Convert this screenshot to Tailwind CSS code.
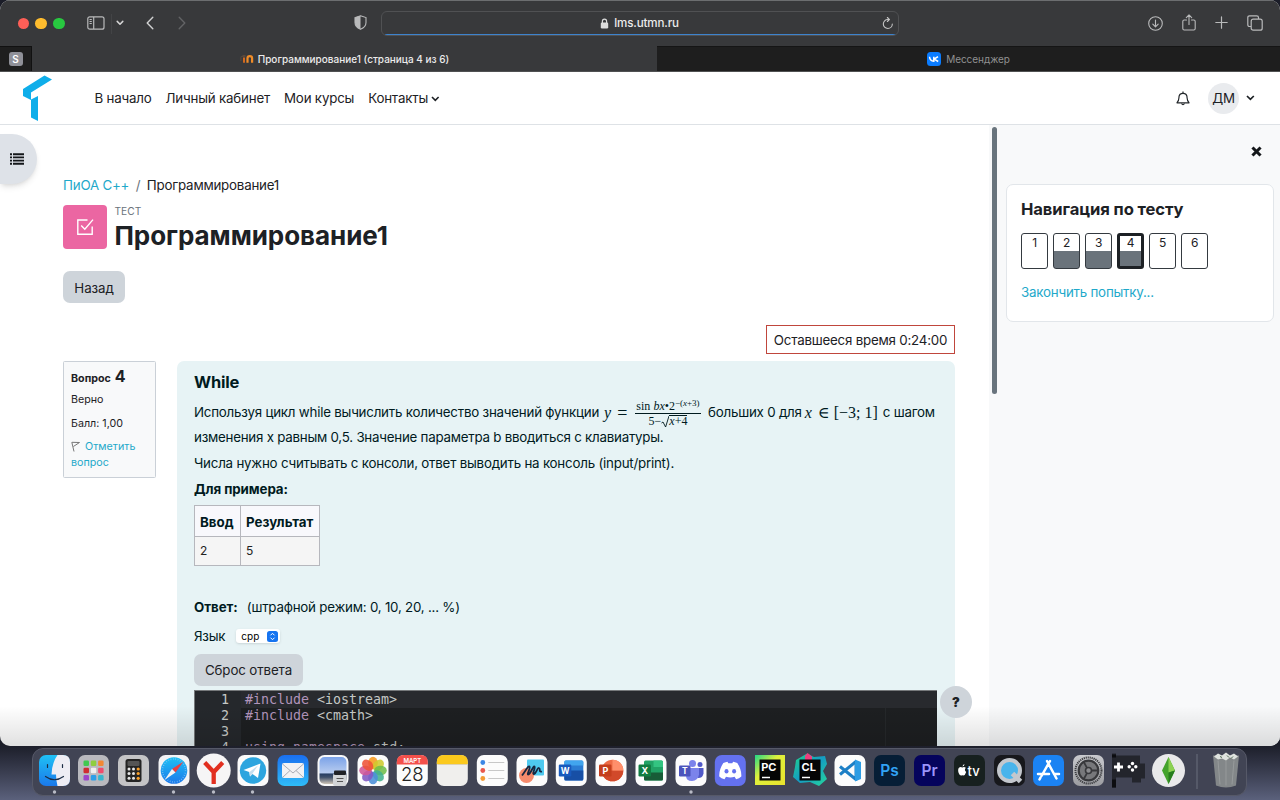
<!DOCTYPE html>
<html lang="ru">
<head>
<meta charset="utf-8">
<title>Программирование1 (страница 4 из 6)</title>
<script src="https://cdn.jsdelivr.net/npm/@tailwindcss/browser@4"></script>
</head>
<body class="w-[1280px] h-[800px] overflow-hidden bg-gradient-to-b from-[#1b1d28] from-93% to-[#5b617c] text-[13.33px] text-[#1d2125] whitespace-nowrap" style="font-family:Inter,'Noto Sans',sans-serif">
<div class="flex flex-col w-[1280px] h-[800px]">

<!-- browser window -->
<div class="relative h-[746px] shrink-0 flex flex-col rounded-[10px] overflow-hidden bg-white">
  <!-- toolbar -->
  <div class="h-[46px] shrink-0 bg-[#38393b] border-t border-[#6c6e70] flex items-center text-[#b9babb]">
    <div class="flex gap-[5.6px] ml-[17.5px]">
      <i class="block size-[11.5px] rounded-full bg-[#fe5f57]"></i><i class="block size-[11.5px] rounded-full bg-[#febc2e] ml-[0.7px]"></i><i class="block size-[11.5px] rounded-full bg-[#28c840] ml-[0.7px]"></i>
    </div>
    <svg class="ml-[22px] mt-[-1px]" width="18" height="14" viewBox="0 0 18 14" fill="none" stroke="currentColor" stroke-width="1.2"><rect x=".8" y=".8" width="16.2" height="12.4" rx="2"/><path d="M6.7 1v12M2.5 3.5h2.3M2.5 5.5h2.3M2.5 7.5h2.3" /></svg>
    <i class="block w-px h-5 bg-[#434446] ml-1.5"></i>
    <svg class="ml-[4px] mt-[-1px]" width="8" height="6" viewBox="0 0 8 6" fill="none" stroke="#d5d5d5" stroke-width="1.5" stroke-linecap="round" stroke-linejoin="round"><path d="M1.2 1.4 4 4.2l2.8-2.8"/></svg>
    <svg class="ml-[22px] mt-[-2px]" width="8" height="14" viewBox="0 0 8 14" fill="none" stroke="#d0d1d1" stroke-width="1.4" stroke-linecap="round" stroke-linejoin="round"><path d="M6.8 1.2 1.2 7l5.6 5.8"/></svg>
    <svg class="ml-[24px] mt-[-2px]" width="8" height="14" viewBox="0 0 8 14" fill="none" stroke="#626365" stroke-width="1.4" stroke-linecap="round" stroke-linejoin="round"><path d="M1.2 1.2 6.8 7l-5.600 5.800"/></svg>
    <svg class="ml-[168px] mt-[-2px]" width="13" height="15" viewBox="0 0 13 15"><path d="M6.500.8 12 2.600v5c0 3.300-2.200 5.400-5.500 6.700C3.200 13 1 10.900 1 7.600v-5z" fill="none" stroke="#b9babb" stroke-width="1.100"/><path d="M6.500.8v13.500C3.200 13 1 10.900 1 7.600v-5z" fill="#b9babb"/></svg>
    <div class="relative ml-[14px] w-[518px] h-[25px] rounded-[6px] bg-[#38393b] border border-[#505153] overflow-hidden flex items-center justify-center text-[#ebebeb] text-[11.600px] tracking-[-.15px] font-medium">
      <svg class="mr-[5px]" width="9" height="11" viewBox="0 0 9 11"><rect x=".8" y="4.600" width="7.400" height="5.900" rx="1.200" fill="#dcdcdc"/><path d="M2.400 5V3.200a2.100 2.100 0 0 1 4.200 0V5" fill="none" stroke="#dcdcdc" stroke-width="1.200"/></svg>
      <span class="pt-px">lms.utmn.ru</span>
      <svg class="absolute right-[4px] top-[5px]" width="12" height="13" viewBox="0 0 12 13" fill="none" stroke="#c4c4c4" stroke-width="1.100" stroke-linecap="round"><path d="M10.300 7A4.500 4.500 0 1 1 5.800 2.500h1.400M5.400.5l2 2-2 2"/></svg>
      <i class="absolute left-[3px] right-[2px] bottom-0 h-[1.500px] bg-[#3d83cd]"></i>
    </div>
    <svg class="ml-[249px] mt-[-1px]" width="15" height="15" viewBox="0 0 15 15" fill="none" stroke="currentColor" stroke-width="1.100" stroke-linecap="round" stroke-linejoin="round"><circle cx="7.500" cy="7.500" r="6.800"/><path d="M7.500 4v6.700M4.800 8.200l2.700 2.700 2.700-2.700"/></svg>
    <svg class="ml-[19px] mt-[-2px]" width="14" height="17" viewBox="0 0 14 17" fill="none" stroke="currentColor" stroke-width="1.100" stroke-linecap="round" stroke-linejoin="round"><path d="M4.500 6H2.200Q.8 6 .8 7.400v7Q.8 16 2.200 16h9.600q1.400 0 1.400-1.500v-7Q13.200 6 11.800 6H9.500M7 10.500V1M4.300 3.600 7 .9l2.700 2.700"/></svg>
    <svg class="ml-[19px] mt-[-2px]" width="13" height="13" viewBox="0 0 13 13" stroke="currentColor" stroke-width="1.200" stroke-linecap="round"><path d="M6.500.8v11.400M.8 6.500h11.400"/></svg>
    <svg class="ml-[19.500px] mt-[-2px]" width="16" height="16" viewBox="0 0 16 16" fill="none" stroke="currentColor" stroke-width="1.200"><rect x="4.200" y="4.200" width="11" height="11" rx="2"/><path d="M4 11.500H2.600q-1.800 0-1.800-1.800V2.600Q.8.8 2.600.8h7.100q1.800 0 1.800 1.800V4"/></svg>
  </div>
  <!-- tabs -->
  <div class="h-[26px] shrink-0 flex bg-[#1e1e1e] text-[10px] border-b border-[#505152]">
    <div class="w-8 flex items-center justify-center border-r border-t border-[#111]"><span class="size-[14px] rounded-[3px] bg-[#8f9098] text-white font-semibold text-[10px] leading-[14px] text-center">S</span></div>
    <div class="w-[625px] bg-[#38393b] flex items-center justify-center text-[#ececec] font-medium">
      <svg class="mr-1" width="14" height="11" viewBox="0 0 14 11" fill="none"><path d="M7.500 9.800V5.200q0-2 2.300-2t2.300 2v4.600" stroke="#f08c28" stroke-width="2.200"/><path d="M.2 3.800 4 1.800l2.500 1.200-2.500 1z" fill="#5d4b3e"/><path d="M.9 4v4" stroke="#5d4b3e" stroke-width=".8"/><path d="M4 4.500v5.300" stroke="#d2691f" stroke-width="2"/></svg>
      <span class="pt-[2px]">Программирование1 (страница 4 из 6)</span>
    </div>
    <div class="flex-1 border-t border-[#151515] flex items-center justify-center text-[#919191]">
      <svg class="mr-[5px]" width="14" height="14" viewBox="0 0 14 14"><rect width="14" height="14" rx="3.500" fill="#0a7cff"/><path d="M2.500 4.800q.4 4.200 4.300 4.500V4.800M11 4.700 7.200 7.100 11.200 9.500" fill="none" stroke="#fff" stroke-width="1.500"/></svg>
      <span class="pt-px tracking-[-.05px]">Мессенджер</span>
    </div>
  </div>
  <!-- site header -->
  <div class="h-[53px] shrink-0 flex items-center border-b border-[#dee2e6] bg-white">
    <svg class="ml-[22px] mt-[-2px]" width="31" height="47" viewBox="0 0 31 47" fill="#0faeea"><path d="M1 15 22.500 1.500 30 5.500 9 18.500V26L1 22z"/><path d="M9 25.500 16 22V47L9 43.500z"/></svg>
    <nav class="flex gap-[14px] ml-[41.500px] pt-[2px] tracking-[-.2px]"><span>В начало</span><span>Личный кабинет</span><span>Мои курсы</span><span class="flex items-center gap-[3px]">Контакты<svg width="9" height="6" viewBox="0 0 9 6" fill="none" stroke="#1d2125" stroke-width="1.600"><path d="M1 1l3.300 3.300L7.600 1"/></svg></span></nav>
    <svg class="ml-auto" width="14" height="15" viewBox="0 0 14 15" fill="none" stroke="#24282c" stroke-width="1.200" stroke-linejoin="round"><path d="M1 11.800C3 10 2.800 8.500 3 5.800 3.200 3.500 4.800 2.300 7 2.300s3.800 1.200 4 3.500c.2 2.700 0 4.200 2 6z"/><path d="M7 2.300V.6M5.500 12.500q1.500 2.400 3 0"/></svg>
    <span class="ml-[18px] size-[31px] rounded-full bg-[#e9ebee] flex items-center justify-center pt-[2px] tracking-[-.2px]">ДМ</span>
    <svg class="ml-[7px] mr-[25px]" width="9" height="6" viewBox="0 0 9 6" fill="none" stroke="#1d2125" stroke-width="1.700"><path d="M1 1l3.400 3.400L7.800 1"/></svg>
  </div>
  <!-- page -->
  <div class="relative flex h-[621px] tracking-[-.22px]">
    <main class="w-[989px] h-full pl-[63px] pr-[34px] shrink-0">
      <div class="mt-[49px] h-[22px] flex items-center pt-[2px]"><a class="text-[#1fa9ca] tracking-[-.2px]">ПиОА C++</a><span class="mx-[6.500px] text-[#6a737b]">/</span><span>Программирование1</span></div>
      <div class="mt-[9px] flex h-11">
        <div class="size-[44px] rounded-[4px] bg-[#eb66a2] flex items-center justify-center"><svg class="mt-[-1px]" width="18" height="18" viewBox="0 0 18 18" fill="none" stroke="#fff" stroke-width="1.400"><path d="M11.500 2H1.800v14.200h14.400V8.500M5.200 7.600l3.600 3.600L17 1.600"/></svg></div>
        <div class="ml-[7.500px] flex flex-col"><span class="text-[10.200px] leading-[13px] text-[#6a737b] tracking-normal">ТЕСТ</span><h1 class="pt-px text-[26px] leading-[34px] font-bold tracking-[-.06px]">Программирование1</h1></div>
      </div>
      <button class="mt-[22px] w-[62px] h-8 rounded-[7px] bg-[#ced4da] flex items-center justify-center pt-[3px] tracking-[-.1px]">Назад</button>
      <div class="mt-[22px] ml-auto w-[189px] h-[29px] border border-[#c0463c] flex items-center justify-center pt-[2px]">Оставшееся время 0:24:00</div>
      <div class="mt-[7px] flex gap-[21px]">
        <div class="w-[93px] h-[117px] border border-[#cad0d7] bg-[#f8f9fa] rounded-[1.500px] pl-[7px] text-[10.700px] tracking-normal text-[#1d2125]">
          <div class="h-[20px] mt-[4px] flex items-baseline font-bold">Вопрос<span class="text-[16px] leading-[20px] ml-[4px]">4</span></div>
          <div class="mt-[6px] leading-4">Верно</div>
          <div class="mt-2 leading-4">Балл: 1,00</div>
          <div class="mt-[7px] leading-4 text-[#1fa9ca]"><svg class="inline mr-[4px] align-[-2px]" width="10" height="11" viewBox="0 0 10 11" fill="none" stroke="#777" stroke-width="1"><path d="M.8 1.200 3 10.500M1 1.300l7.500.2L2.400 5.500"/></svg>Отметить<br>вопрос</div>
        </div>
        <div class="w-[778px] h-[385px] rounded-t-[7px] bg-[#e7f3f5] pl-[17px] text-[#001a1e]">
          <h2 class="mt-[11px] text-[16.500px] leading-[20px] font-bold tracking-[-.2px]">While</h2>
          <div class="mt-[7px] h-[28px] flex items-center">
            <span>Используя цикл while вычислить количество значений функции</span>
            <span class="ml-[5px] w-[101px] flex items-center text-[16px] tracking-normal" style="font-family:'Liberation Serif',serif"><i>y</i><span class="ml-[6px] text-[18px]">=</span>
              <span class="ml-[8px] mt-[2px] flex flex-col items-center text-[12px] leading-[13px]"><span class="border-b border-[#001a1e] px-px h-[14px]">sin <i>bx</i>•2<sup class="text-[9px] leading-none top-[-4px]">−(<i>x</i>+3)</sup></span><span class="flex items-center h-[14px]">5−<svg width="8" height="13" viewBox="0 0 8 13" fill="none" stroke="#001a1e" stroke-width=".9"><path d="M.5 8 2 7l2.600 5L8 1"/></svg><span class="border-t border-[#001a1e] h-[12px] leading-[11px]"><i>x</i>+4</span></span></span>
            </span>
            <span class="ml-[3px]">больших 0 для</span>
            <span class="ml-[3px] text-[16px] tracking-normal" style="font-family:'Liberation Serif','DejaVu Serif',serif"><i>x</i> <span class="ml-[2px]">∈</span> [−3; 1]</span>
            <span class="ml-[5px]">с шагом</span>
          </div>
          <p class="mt-[-1px] leading-[22px] tracking-[-.24px]">изменения x равным 0,5. Значение параметра b вводиться с клавиатуры.</p>
          <p class="mt-[4px] leading-[22px]">Числа нужно считывать с консоли, ответ выводить на консоль (input/print).</p>
          <p class="mt-[4px] leading-[22px] font-bold tracking-[-.08px]">Для примера:</p>
          <div class="mt-[5px] w-[126px] h-[61px] grid grid-cols-[45px_78px] grid-rows-[30px_28px] gap-px p-px bg-[#b6b7bd]">
            <div class="bg-[#f8f8fc] flex items-center pl-[5px] pt-[3px] font-bold tracking-normal">Ввод</div><div class="bg-[#f8f8fc] flex items-center pl-[5px] pt-[3px] font-bold tracking-normal">Результат</div>
            <div class="bg-[#f5f5f5] flex items-center pl-[5px] text-[12px] text-[#222]">2</div><div class="bg-[#f5f5f5] flex items-center pl-[5px] text-[12px] text-[#222]">5</div>
          </div>
          <p class="mt-[30px] leading-[22px]"><b class="tracking-[-.05px]">Ответ:</b><span class="ml-[9px]">(штрафной режим: 0, 10, 20, ... %)</span></p>
          <div class="mt-[8px] h-[20px] flex items-center"><span class="pt-px">Язык</span><span class="ml-[11px] w-[44px] h-[14px] rounded-[3px] bg-white shadow-sm flex items-center pl-[5px] pr-[2px] justify-between text-[10px] tracking-normal text-black">cpp<svg width="11" height="11" viewBox="0 0 11 11"><rect width="11" height="11" rx="2.500" fill="#1674f0"/><path d="M3.500 4.300l2-2 2 2M3.500 6.700l2 2 2-2" fill="none" stroke="#fff"/></svg></span></div>
          <button class="mt-[8px] w-[109px] h-[32px] rounded-[7px] bg-[#ced4da] flex items-center justify-center pt-[2px] tracking-[-.13px] text-[#1d2125]">Сброс ответа</button>
          <div class="mt-[4px] flex items-start tracking-normal">
            <!-- code editor -->
            <div class="w-[743px] shrink-0 h-[57px] overflow-hidden border-l border-t border-[#76797b] bg-[#1d1f21] flex text-[13.300px] leading-[16px] text-[#c5c8c6]" style="font-family:'DejaVu Sans Mono',monospace">
              <div class="w-[46px] shrink-0 bg-[#25282c] text-right pr-[12px] pt-px">1<br>2<br>3<br>4</div>
              <div class="w-[645px] shrink-0 h-full border-r border-[#25282a]"><div class="pl-[4px] pt-px w-[697px] bg-[#282a2e]"><span class="text-[#b294bb]">#include</span> &lt;iostream&gt;</div><div class="pl-[4px]"><span class="text-[#b294bb]">#include</span> &lt;cmath&gt;</div><div class="h-4"></div><div class="pl-[4px]"><span class="text-[#b294bb]">using</span> <span class="text-[#b294bb]">namespace</span> std;</div></div>
            </div>
            <span class="relative z-10 ml-[3px] mt-[-4px] size-8 shrink-0 rounded-full bg-[#ced4da] flex items-center justify-center pt-px font-black text-[13px] text-[#1d2125]">?</span>
          </div>
        </div>
      </div>
    </main>
    <aside class="flex-1 h-full bg-[#f8f9fa] flex">
      <div class="ml-[3px] mt-[2px] w-[5px] h-[267px] rounded-full bg-[#69747d]"></div>
      <div class="ml-[9px] w-[268px]">
        <svg class="mt-[21px] ml-auto mr-[12px]" width="11" height="11" viewBox="0 0 11 11" stroke="#14171a" stroke-width="3" stroke-linecap="square"><path d="M2.500 2.500l6 6M8.500 2.500l-6 6"/></svg>
        <section class="mt-[27px] h-[138px] rounded-[7px] border border-[#e2e6ea] bg-white pl-[14px]">
          <h3 class="mt-[13px] text-[16.600px] leading-[22px] font-bold tracking-[-.1px]">Навигация по тесту</h3>
          <div class="mt-[13px] flex gap-[5px] text-[12px] leading-[17px] text-center">
            <span class="w-[27px] h-[36px] rounded-[3px] border border-[#343a40]">1</span>
            <span class="w-[27px] h-[36px] rounded-[3px] border border-[#343a40] bg-linear-to-b from-white from-50% to-[#6a737b] to-50%">2</span>
            <span class="w-[27px] h-[36px] rounded-[3px] border border-[#343a40] bg-linear-to-b from-white from-50% to-[#6a737b] to-50%">3</span>
            <span class="w-[27px] h-[36px] rounded-[3px] border-[3px] border-[#1d2125] bg-linear-to-b from-white from-50% to-[#6a737b] to-50% leading-[13px]">4</span>
            <span class="w-[27px] h-[36px] rounded-[3px] border border-[#343a40]">5</span>
            <span class="w-[27px] h-[36px] rounded-[3px] border border-[#343a40]">6</span>
          </div>
          <a class="block mt-[12px] leading-[22px] text-[#1fa9ca]">Закончить попытку...</a>
        </section>
      </div>
    </aside>
    <div class="absolute left-0 top-[9px] w-[37px] h-[50px] rounded-r-full bg-[#dee2e8] shadow-md flex items-center pl-[9px]"><svg width="15" height="12" viewBox="0 0 15 12" stroke="#14171a" stroke-width="1.900"><path d="M1 1.200h2M1 4.400h2M1 7.600h2M1 10.800h2M4 1.200h11M4 4.400h11M4 7.600h11M4 10.800h11"/></svg></div>
    <div class="absolute left-0 bottom-0 w-full h-[40px] bg-gradient-to-b from-transparent to-black/12 pointer-events-none"></div>
  </div>
</div>

<!-- dock -->
<div class="mt-[2px] ml-[32px] w-[1215px] h-[48px] shrink-0 rounded-[11px] bg-[#414454] border border-[#565968] pl-px flex">
  <svg width="1212" height="46" viewBox="34 749 1212 46" style="font-family:Inter,sans-serif">
    <defs>
      <linearGradient id="gb" x1="0" y1="0" x2="0" y2="1"><stop stop-color="#1fc1f5"/><stop offset="1" stop-color="#1a78ea"/></linearGradient>
      <linearGradient id="bb" x1="0" y1="0" x2="0" y2="1"><stop stop-color="#1a6ff0"/><stop offset="1" stop-color="#2fbdf8"/></linearGradient>
      <linearGradient id="gg" x1="0" y1="0" x2="0" y2="1"><stop stop-color="#c9cace"/><stop offset="1" stop-color="#9b9ca0"/></linearGradient>
      <linearGradient id="pc" x1="0" y1="0" x2="1" y2="1"><stop stop-color="#21d789"/><stop offset=".4" stop-color="#dff03c"/><stop offset="1" stop-color="#e9e32c"/></linearGradient>
      <linearGradient id="cl" x1="0" y1="0" x2="1" y2="1"><stop stop-color="#21d789"/><stop offset=".5" stop-color="#149bc4"/><stop offset="1" stop-color="#27d79a"/></linearGradient>
      <linearGradient id="sky" x1="0" y1="0" x2="0" y2="1"><stop stop-color="#7ba2e8"/><stop offset=".6" stop-color="#b9cdf0"/><stop offset=".62" stop-color="#263d63"/><stop offset=".75" stop-color="#40506a"/><stop offset="1" stop-color="#cfc6b8"/></linearGradient>
      <rect id="t" x="-15.500" y="-15.500" width="31" height="31" rx="7"/>
    </defs>
    <!-- Finder -->
    <g transform="translate(54.500 770.500)"><use href="#t" fill="url(#gb)"/><path d="M3-15.500h5.500q7 0 7 7v17q0 7-7 7H3Q1.500 10 1.500 4H-3Q-2.500-8 3-15.500z" fill="#eeedf4"/><path d="M-7-6v3M8-6v3M-9 6q9 6.500 18 0" stroke="#1b2c44" stroke-width="1.200" fill="none" stroke-linecap="round"/></g>
    <!-- Launchpad -->
    <g transform="translate(93.500 770.500)"><use href="#t" fill="#b9b9be"/><g><rect x="-10" y="-10" width="5.500" height="5.500" rx="1.300" fill="#41c950"/><rect x="-2.700" y="-10" width="5.500" height="5.500" rx="1.300" fill="#8fce3f"/><rect x="4.600" y="-10" width="5.500" height="5.500" rx="1.300" fill="#f28734"/><rect x="-10" y="-2.700" width="5.500" height="5.500" rx="1.300" fill="#d02c32"/><rect x="-2.700" y="-2.700" width="5.500" height="5.500" rx="1.300" fill="#efefef"/><rect x="4.600" y="-2.700" width="5.500" height="5.500" rx="1.300" fill="#f04b6d"/><rect x="-10" y="4.600" width="5.500" height="5.500" rx="1.300" fill="#9c44c9"/><rect x="-2.700" y="4.600" width="5.500" height="5.500" rx="1.300" fill="#2d9fe8"/><rect x="4.600" y="4.600" width="5.500" height="5.500" rx="1.300" fill="#37b6ce"/></g></g>
    <!-- Calculator -->
    <g transform="translate(133.500 770.500)"><use href="#t" fill="#c4c4c6"/><rect x="-8" y="-11.500" width="16" height="23" rx="2.500" fill="#242424"/><rect x="-6" y="-9.500" width="12" height="5" rx="1" fill="#555"/><g fill="#e5e5e5"><circle cx="-4.500" cy="-1.500" r="1.500"/><circle cy="-1.500" r="1.500"/><circle cx="-4.500" cy="3" r="1.500"/><circle cy="3" r="1.500"/><circle cx="-4.500" cy="7.800" r="1.500"/><circle cy="7.800" r="1.500"/></g><g fill="#f7a02b"><circle cx="4.700" cy="-1.500" r="1.600"/><circle cx="4.700" cy="3" r="1.600"/><circle cx="4.700" cy="7.800" r="1.600"/></g></g>
    <!-- Safari -->
    <g transform="translate(174 770.500)"><use href="#t" fill="#f3f3f5"/><circle r="13.300" fill="url(#gb)"/><circle r="11.500" fill="none" stroke="#8ec8f7" stroke-width="1.500" stroke-dasharray=".6 1.800"/><path d="M9.500-9 1.500 2-2-1.500z" fill="#ec4040"/><path d="M-9.500 9.500 1.500 2-2-1.500z" fill="#f2f2f2"/></g>
    <!-- Yandex -->
    <g transform="translate(213.700 770.500)"><circle r="17" fill="#f6f5f6"/><path d="M-9-8 0 1.500 9-8M0 1v12.500" stroke="#e22f20" stroke-width="4.300" fill="none"/></g>
    <!-- Telegram -->
    <g transform="translate(253 770.500)"><use href="#t" fill="#fbfbfb"/><circle r="13.200" fill="#2da5df"/><path d="M-9.500-.5 7.500-7 5 7.500-.5 3.500-3 6-3.800 1.500z" fill="#fff"/><path d="M-3.500 1.500 5-5-.8 3.500-3 6z" fill="#c5dff0"/></g>
    <!-- Mail -->
    <g transform="translate(293 770.500)"><use href="#t" fill="url(#bb)"/><rect x="-11" y="-7.500" width="22" height="15" rx="2" fill="#f2f2f4"/><path d="M-10.500-6.500 0 2.500l10.500-9M-10.500 7-3 0M10.500 7 3 0" stroke="#a9adb5" fill="none"/></g>
    <!-- Preview -->
    <g transform="translate(333 770.500)"><use href="#t" fill="#f8f8f8"/><rect x="-13.500" y="-13.500" width="27" height="27" rx="5" fill="url(#sky)"/><rect x="0" y="3" width="13.500" height="12.500" rx="2" fill="#d3d5d7"/><rect x="1" y="0" width="12" height="4.500" rx="1" fill="#202226"/><path d="M3.500 8h7M4 11h6" stroke="#555"/></g>
    <!-- Photos -->
    <g transform="translate(373 770.500)"><use href="#t" fill="#fcfcfc"/><g fill-opacity=".88"><ellipse cy="-7.500" rx="4.800" ry="6.300" fill="#f79a1f"/><ellipse cy="-7.500" rx="4.800" ry="6.300" fill="#cfcb2e" transform="rotate(45)"/><ellipse cy="-7.500" rx="4.800" ry="6.300" fill="#6fbd4a" transform="rotate(90)"/><ellipse cy="-7.500" rx="4.800" ry="6.300" fill="#41b08e" transform="rotate(135)"/><ellipse cy="-7.500" rx="4.800" ry="6.300" fill="#4a90da" transform="rotate(180)"/><ellipse cy="-7.500" rx="4.800" ry="6.300" fill="#8158c4" transform="rotate(225)"/><ellipse cy="-7.500" rx="4.800" ry="6.300" fill="#cf5698" transform="rotate(270)"/><ellipse cy="-7.500" rx="4.800" ry="6.300" fill="#ee5338" transform="rotate(315)"/></g></g>
    <!-- Calendar -->
    <g transform="translate(412.300 770.500)"><use href="#t" fill="#fcfcfc"/><path d="M-15.500-6v-2.500q0-7 7-7h17q7 0 7 7V-6z" fill="#f4504b"/><text y="-8" text-anchor="middle" font-size="6" font-weight="600" fill="#fff">МАРТ</text><text y="10.500" text-anchor="middle" font-size="18.500" font-weight="300" fill="#222">28</text></g>
    <!-- Notes -->
    <g transform="translate(452.300 770.500)"><use href="#t" fill="#f0efed"/><path d="M-15.500-6.500v-2q0-7 7-7h17q7 0 7 7v2z" fill="#fbc91d"/><path d="M-15-6h30" stroke="#d8c9a0" stroke-width=".8"/></g>
    <!-- Reminders -->
    <g transform="translate(492.300 770.500)"><use href="#t" fill="#fcfcfc"/><circle cx="-9.500" cy="-8" r="2.400" fill="#3b86e5"/><circle cx="-9.500" cy="0" r="2.400" fill="#e9584c"/><circle cx="-9.500" cy="8" r="2.400" fill="#f39b34"/><path d="M-4-8h16M-4 0h16M-4 8h16" stroke="#c8c8c8"/></g>
    <!-- Freeform -->
    <g transform="translate(532 770.500)"><use href="#t" fill="#fcfcfc"/><rect x="-5" y="-11" width="17" height="16" rx="1" fill="#4ec9ef"/><circle cx="-5.500" cy="5" r="7.500" fill="#f58a6c"/><path d="M-10 5C-6 0-4-5-2.500-4S-6 5-3.500 4 1-5 2.500-4-.5 4 2 3.500 5-3 7-2.500 6 2 10 1" stroke="#17263f" stroke-width="1.800" fill="none"/></g>
    <!-- Word -->
    <g transform="translate(571.300 770.500)"><use href="#t" fill="#fcfcfc"/><rect x="-7" y="-10" width="19" height="20" rx="1.500" fill="#2b7cd3"/><path d="M-7-8.500q0-1.500 1.500-1.500h16q1.500 0 1.500 1.500V-5H-7z" fill="#41a5ee"/><path d="M-7 0h19v8.500q0 1.500-1.500 1.500h-16Q-7 10-7 8.500z" fill="#174fa5"/><rect x="-12.500" y="-6" width="12.500" height="12" rx="1.200" fill="#185abd"/><text x="-6.200" y="3.200" text-anchor="middle" font-size="8.500" font-weight="700" fill="#fff">W</text></g>
    <!-- PowerPoint -->
    <g transform="translate(611 770.500)"><use href="#t" fill="#fcfcfc"/><circle cx="1.500" r="10.800" fill="#ed6c47"/><path d="M1.500 0h10.800a10.800 10.800 0 0 1-21.600 0z" fill="#d1492a"/><path d="M1.500-10.800A10.800 10.800 0 0 1 12.300 0H1.500z" fill="#ff8f6b"/><rect x="-12" y="-6" width="12.500" height="12" rx="1.200" fill="#c43e1c"/><text x="-5.700" y="3.200" text-anchor="middle" font-size="9" font-weight="700" fill="#fff">P</text></g>
    <!-- Excel -->
    <g transform="translate(651 770.500)"><use href="#t" fill="#fcfcfc"/><rect x="-7" y="-10" width="19" height="20" rx="1.500" fill="#21a366"/><path d="M2.500-10h8q1.500 0 1.500 1.500V-3.500H2.500z" fill="#33c481"/><path d="M-7 2h19v6.500q0 1.500-1.500 1.500h-16Q-7 10-7 8.500z" fill="#185c37"/><rect x="-12.500" y="-6" width="12.500" height="12" rx="1.200" fill="#107c41"/><text x="-6.200" y="3.200" text-anchor="middle" font-size="9" font-weight="700" fill="#fff">X</text></g>
    <!-- Teams -->
    <g transform="translate(691 770.500)"><use href="#t" fill="#fcfcfc"/><circle cx="1.500" cy="-7" r="3.500" fill="#7b83eb"/><circle cx="9" cy="-6" r="2.500" fill="#5059c9"/><path d="M5-2.500h7.500V3q-1 5-6 4.500z" fill="#5059c9"/><path d="M-5-2.500H8V4q-1 6.500-7 6.500T-5 5z" fill="#7b83eb"/><rect x="-12" y="-5" width="11.500" height="11" rx="1.200" fill="#4b53bc"/><text x="-6.200" y="3.800" text-anchor="middle" font-size="8.500" font-weight="700" fill="#fff">T</text></g>
    <!-- Discord -->
    <g transform="translate(730.300 770.500)"><use href="#t" fill="#6471ef"/><path d="M-7-7.500Q-4.500-8.500-2.800-8.700L-2-7.200h4l.8-1.500q1.700.2 4.200 1.200Q11.500-.5 11 6q-2 2-5.200 2.700L4.300 6.300Q0 7.500-4.300 6.300l-1.500 2.400Q-9 8-11 6q-.5-6.500 4-13.500z" fill="#fff"/><ellipse cx="-3.800" cy=".8" rx="2" ry="2.300" fill="#6471ef"/><ellipse cx="3.800" cy=".8" rx="2" ry="2.300" fill="#6471ef"/></g>
    <!-- PyCharm -->
    <g transform="translate(770 770)"><rect x="-15" y="-15" width="30" height="30" fill="url(#pc)"/><rect x="-10.500" y="-10.500" width="21" height="21" fill="#050505"/><text x="-8.800" y="1" font-size="11" font-weight="700" fill="#fff">PC</text><path d="M-8 7.500h8" stroke="#fff" stroke-width="1.500"/></g>
    <!-- CLion -->
    <g transform="translate(810 770)"><path d="M-14-10-3-16.500 4-13 15-14 17-6 13 1l4 8-8 7-9-4-10 1-7-6 2-10z" fill="url(#cl)"/><path d="M-5-14-2.500-17 2-13.500V-9h-7z" fill="#ee3f7d"/><rect x="-10.500" y="-10.500" width="21" height="21" fill="#050505"/><text x="-8.500" y="1" font-size="11" font-weight="700" fill="#fff">CL</text><path d="M-8 7.500h8" stroke="#fff" stroke-width="1.500"/></g>
    <!-- VS Code -->
    <g transform="translate(850 770.500)"><use href="#t" fill="#fcfcfc"/><path d="M6-9v18L-10-4" fill="none" stroke="#1c7fc6" stroke-width="3" stroke-linejoin="round"/><path d="M6-9-10 4" stroke="#1c7fc6" stroke-width="3"/><path d="M5-11l6 2.500v17L5 11z" fill="#2c9ce4"/></g>
    <!-- Photoshop, Premiere -->
    <g transform="translate(889.500 770.500)"><use href="#t" fill="#061e36"/><text y="5" text-anchor="middle" font-size="15.500" font-weight="600" fill="#31a3f5">Ps</text></g>
    <g transform="translate(929.500 770.500)"><use href="#t" fill="#05045c"/><text y="5" text-anchor="middle" font-size="15.500" font-weight="600" fill="#9b94fa">Pr</text></g>
    <!-- TV -->
    <g transform="translate(969.500 770.500)"><use href="#t" fill="#17201f"/><path d="M-7-3q1.500-1 3.300.2-2 2.500.4 4.300Q-4.500 5-6 5q-1-.6-2 0-2 .3-3.200-3.500Q-12-3-9-3.500q1 .1 2 .5zM-7-4q.1-2 2-2.600Q-5-4.500-7-4z" fill="#fff"/><text x="-2" y="5" font-size="13" font-weight="500" fill="#fff">tv</text></g>
    <!-- QuickTime -->
    <g transform="translate(1009.500 770.500)"><use href="#t" fill="#17181c"/><circle r="10.500" fill="#49b4ec" stroke="#c3c7cd" stroke-width="4"/><path d="M3 3l8 8" stroke="#c3c7cd" stroke-width="5"/></g>
    <!-- App Store -->
    <g transform="translate(1048.500 770.500)"><use href="#t" fill="#1b83f3"/><path d="M1.500-9.500-7 5.500M-1.500-9.500 8 8M-10.500 3.500h11M5.500 3.500h5M-8 7l-1 2" stroke="#fff" stroke-width="2.500" stroke-linecap="round"/></g>
    <!-- Settings -->
    <g transform="translate(1088.500 770.500)"><use href="#t" fill="url(#gg)"/><circle r="13" fill="none" stroke="#3d3e41" stroke-width="2" stroke-dasharray="1.200 .8"/><circle r="9.800" fill="#77787b" stroke="#38393c" stroke-width="2.200"/><circle r="3" fill="#8c8d90" stroke="#38393c" stroke-width="1.600"/><path d="M3 0h7M-1.500-2.600-5-9M-1.500 2.600-5 9" stroke="#38393c" stroke-width="1.800"/></g>
    <!-- Game controller -->
    <g transform="translate(1128 770.500)"><path d="M-16-17h4v2h24v8h5v15h-4v4h-9V7h-16v10h-4z" fill="#23252c"/><path d="M-16-13v-3h4v3zM-16 9h4v8h-4z" fill="#0c0d10"/><path d="M-9.500-8v9M-14-3.500h9" stroke="#fff" stroke-width="2.800"/><g fill="#fff"><circle cx="4.500" cy="-7" r="1.700"/><circle cx="4.500" cy="-.5" r="1.700"/><circle cx="1.200" cy="-3.700" r="1.700"/><circle cx="7.800" cy="-3.700" r="1.700"/></g></g>
    <!-- Sims -->
    <g transform="translate(1168.500 770.500)"><circle r="16.500" fill="#e9e9ea"/><path d="M0-13.500 6.500 0 0 13.500-6.500 0z" fill="#44a32c"/><path d="M0-13.500 6.500 0 0 2z" fill="#8cd152"/><path d="M0 2 6.500 0 0 13.500z" fill="#277d1d"/></g>
    <path d="M1197 754v35" stroke="#6b6e7c"/>
    <!-- Trash -->
    <g transform="translate(1226 770.500)"><path d="M-13-15h26L10 15q-10 4-20 0z" fill="#8f9393" fill-opacity=".85"/><path d="M-8-10-6 14M0-10v25M8-10 6 14" stroke="#a5a9a9" stroke-opacity=".6"/><path d="M-12-14l4-3 4 2 4-3 4 3 4-2 4 3-4 3-4-2-4 3-4-2-4 1z" fill="#dfe3df"/><path d="M-6-14l2 1M1-15l2 2M7-14l-2 2" stroke="#4b6750"/></g>
    <g fill="#b9bbc5"><circle cx="54.500" cy="792" r="1.700"/><circle cx="173.500" cy="792" r="1.700"/><circle cx="213.500" cy="792" r="1.700"/><circle cx="252.500" cy="792" r="1.700"/><circle cx="691" cy="792" r="1.700"/></g>
  </svg>
</div>
</div>
</body>
</html>
